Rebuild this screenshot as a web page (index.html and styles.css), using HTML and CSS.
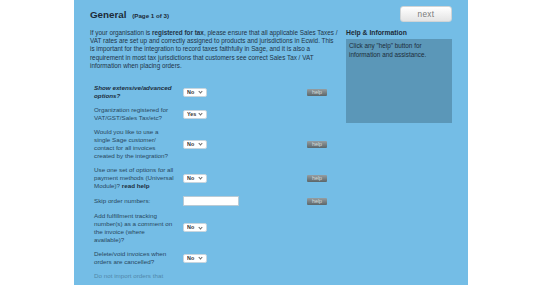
FILE: index.html
```html
<!DOCTYPE html>
<html lang="en">
<head>
  <meta charset="UTF-8" />
  <title>Sage Integration - General</title>
  <link rel="stylesheet" href="styles.css">
</head>
<body>
  <div class="panel">
    <div class="top">
      <h1>General <small>(Page 1 of 3)</small></h1>
      <button class="next">next</button>
    </div>

    <div class="cols">
      <div class="main">
        <p class="intro">
          If your organisation is <b>registered for tax</b>, please ensure that all applicable Sales Taxes /<br>
          VAT rates are set up and correctly assigned to products and jurisdictions in Ecwid. This<br>
          is important for the integration to record taxes faithfully in Sage, and it is also a<br>
          requirement in most tax jurisdictions that customers see correct Sales Tax / VAT<br>
          information when placing orders.
        </p>

        <div class="form">
          <label class="lbl strong">Show extensive/advanced options?</label>
          <span class="sel"><select><option>No</option></select></span>
          <button class="help">help</button>

          <label class="lbl">Organization registered for VAT/GST/Sales Tax/etc?</label>
          <span class="sel"><select><option>Yes</option></select></span>
          <span></span>

          <label class="lbl">Would you like to use a single Sage customer/ contact for all invoices created by the integration?</label>
          <span class="sel"><select><option>No</option></select></span>
          <button class="help">help</button>

          <label class="lbl">Use one set of options for all payment methods (Universal Module)? <b>read help</b></label>
          <span class="sel"><select><option>No</option></select></span>
          <button class="help">help</button>

          <label class="lbl">Skip order numbers:</label>
          <input type="text" class="txt" />
          <button class="help">help</button>

          <label class="lbl">Add fulfillment tracking number(s) as a comment on the invoice (where available)?</label>
          <span class="sel"><select><option>No</option></select></span>
          <span></span>

          <label class="lbl">Delete/void invoices when orders are cancelled?</label>
          <span class="sel"><select><option>No</option></select></span>
          <span></span>

          <label class="lbl faded">Do not import orders that</label>
          <span></span>
          <span></span>
        </div>
      </div>

      <aside class="side">
        <h3>Help &amp; Information</h3>
        <div class="info">Click any "help" button for information and assistance.</div>
      </aside>
    </div>
  </div>
</body>
</html>
```

FILE: styles.css
```css
* {
  margin: 0;
  padding: 0;
  box-sizing: border-box;
}
body {
  background: #fff;
  font-family: "Liberation Sans", Arial, sans-serif;
  color: #1f3447;
}
.panel {
  margin-left: 74px;
  width: 394px;
  height: 285px;
  overflow: hidden;
  background: #74bde6;
  padding: 6px 16px 0 16px;
}
.top {
  display: flex;
  justify-content: space-between;
  align-items: center;
  margin-bottom: 7px;
}
h1 {
  font-size: 9.8px;
  font-weight: bold;
  color: #1c2b38;
}
h1 small {
  font-size: 6.2px;
  margin-left: 3px;
}
.next {
  width: 52px;
  height: 16px;
  background: linear-gradient(#ffffff, #e4e4e4);
  border: 1px solid #d0d4d6;
  border-radius: 3px;
  color: #7a7a7a;
  font-family: inherit;
  font-size: 8.2px;
  letter-spacing: 0.4px;
}
.cols {
  display: grid;
  grid-template-columns: 252px 106px;
  column-gap: 4px;
}
.intro {
  font-size: 6.35px;
  line-height: 8.2px;
  white-space: nowrap;
  color: #1f3447;
}
.form {
  display: grid;
  grid-template-columns: 89px 124px 20px;
  row-gap: 6.1px;
  align-items: center;
  margin-top: 14px;
  padding-left: 4px;
}
.lbl {
  font-size: 6.25px;
  line-height: 8px;
  padding-right: 9px;
  color: #284760;
}
.lbl.strong {
  font-weight: bold;
  font-style: italic;
  color: #1c2e3d;
}
.lbl b {
  color: #1c2e3d;
}
.lbl.faded {
  opacity: 0.45;
}
.sel {
  position: relative;
  display: block;
  width: 24px;
  height: 9px;
}
.sel select {
  display: block;
  appearance: none;
  width: 24px;
  height: 9px;
  background: #fff;
  border: 1px solid #c8d6df;
  border-radius: 2px;
  font-family: inherit;
  font-size: 5.4px;
  font-weight: bold;
  line-height: 7px;
  color: #333;
  padding: 0 0 0 3px;
}
.sel::after {
  content: "";
  position: absolute;
  right: 5px;
  top: 2.6px;
  width: 2px;
  height: 2px;
  border-right: 0.8px solid #666;
  border-bottom: 0.8px solid #666;
  transform: rotate(45deg);
}
.txt {
  display: block;
  width: 56px;
  height: 9.5px;
  background: #fff;
  border: 1px solid #b9cbd6;
}
.help {
  display: block;
  width: 20px;
  height: 7px;
  background: linear-gradient(#959ea2, #5c6669);
  border: none;
  border-radius: 1px;
  color: #d5dadb;
  font-family: inherit;
  font-size: 5.4px;
  line-height: 7px;
}
.side h3 {
  font-size: 6.8px;
  line-height: 8px;
  font-weight: bold;
  color: #1c2b38;
  margin-bottom: 2px;
}
.info {
  height: 84px;
  background: #5b97b8;
  padding: 2px 3px;
  font-size: 6.35px;
  line-height: 9px;
  color: #1b2d3a;
}
```
